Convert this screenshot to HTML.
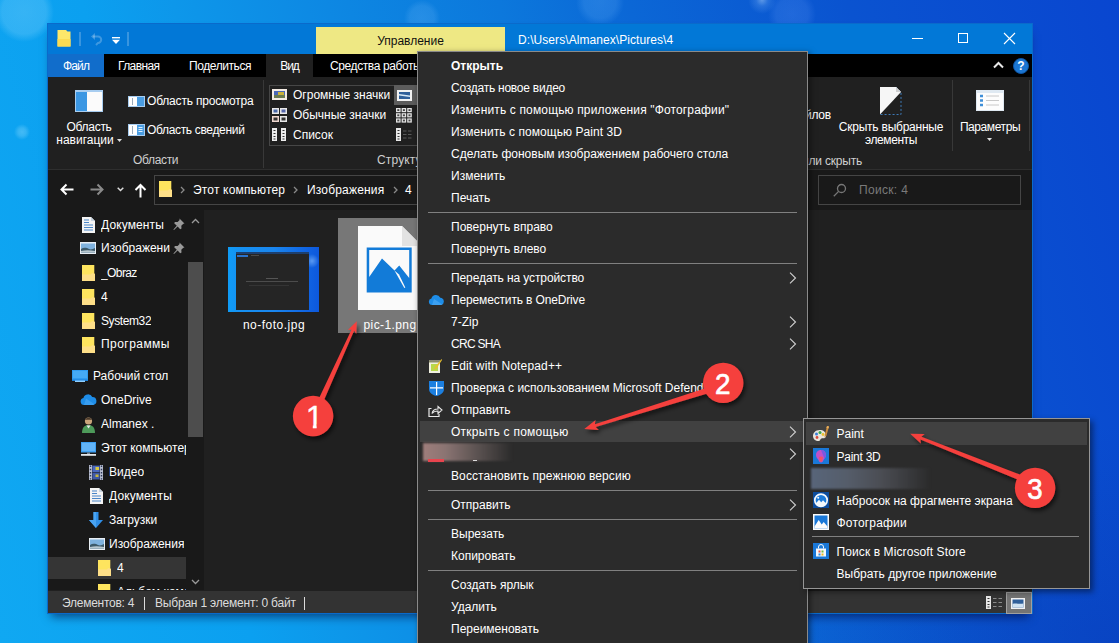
<!DOCTYPE html>
<html lang="ru">
<head>
<meta charset="utf-8">
<title>Explorer</title>
<style>
*{box-sizing:border-box;margin:0;padding:0}
html,body{width:1119px;height:643px;overflow:hidden}
body{position:relative;font-family:"Liberation Sans",sans-serif;font-size:12px;color:#fff;
background:
 radial-gradient(circle at 24px 12px, rgba(150,220,255,.30) 0, rgba(150,220,255,.26) 22px, rgba(150,220,255,0) 30px),
 radial-gradient(circle at 22px 132px, rgba(170,230,255,.35) 0, rgba(170,230,255,.25) 4px, rgba(170,230,255,0) 8px),
 radial-gradient(circle at 422px 18px, rgba(140,200,255,.20) 0, rgba(140,200,255,.16) 12px, rgba(140,200,255,0) 18px),
 radial-gradient(circle at 600px 2px, rgba(120,190,255,.22) 0, rgba(120,190,255,.18) 16px, rgba(120,190,255,0) 24px),
 radial-gradient(circle at 762px 0px, rgba(190,225,255,.45) 0, rgba(150,200,255,.20) 6px, rgba(120,190,255,0) 14px),
 radial-gradient(circle at 792px 14px, rgba(120,170,255,.20) 0, rgba(120,170,255,.16) 16px, rgba(120,170,255,0) 24px),
 radial-gradient(ellipse at 1119px 643px, rgba(6,40,160,.28) 0, rgba(6,40,160,0) 380px),
 linear-gradient(75deg,#10a8f2 0,#0ba0f0 245px,#0d97ea 333px,#0d86e2 502px,#0c78dc 647px,#0b67d6 773px,#0a53d0 985px,#0946d0 1247px);
}
.abs{position:absolute}
#win{position:absolute;left:48px;top:24px;width:984px;height:589px;background:#202020;box-shadow:0 0 0 1px #0a6acb,0 7px 9px -3px rgba(0,0,50,.55)}
#title{position:absolute;left:0;top:0;width:984px;height:30px;background:#0278d7}
#tabs{position:absolute;left:0;top:30px;width:984px;height:23px;background:#000}
#ribbon{position:absolute;left:0;top:53px;width:984px;height:93px;background:#202020}
#addr{position:absolute;left:0;top:146px;width:984px;height:40px;background:#191919}
#nav{position:absolute;left:0;top:186px;width:156px;height:380px;background:#191919;overflow:hidden}
#content{position:absolute;left:157px;top:186px;width:827px;height:380px;background:#202020}
#status{position:absolute;left:0;top:567px;width:984px;height:22px;background:#333}

#menu{position:absolute;left:417px;top:51px;width:391px;height:600px;background:#2b2b2b;border:1px solid #8a8a8a;border-bottom:0;box-shadow:2px 2px 6px rgba(0,0,0,.5)}
#sub{position:absolute;left:803px;top:418px;width:287px;height:171px;background:#2b2b2b;border:1px solid #969696;box-shadow:3px 3px 6px rgba(0,0,0,.45)}
.in{position:absolute;left:-1px;top:-1px;width:0;height:0}
#sub .t{margin-top:1px}
.t{position:absolute;white-space:nowrap;line-height:14px}
</style>
</head>
<body>
<div id="win">
 <div id="title">
  <svg class="abs" style="left:9px;top:5px" width="14" height="18" viewBox="0 0 14 18"><path d="M1 1h8l1.500 1.500H13.500V17.500H.500V1z" fill="#fde76a"/><path d="M.500 10h13v7.500H.500z" fill="#fbdb52"/></svg>
  <div class="abs" style="left:31px;top:8px;width:2px;height:14px;background:rgba(255,255,255,.22)"></div>
  <svg class="abs" style="left:43px;top:8px" width="12" height="14" viewBox="0 0 12 14"><path d="M2 4.5h5a3.2 3.2 0 0 1 0 6.4L5 13" fill="none" stroke="rgba(255,255,255,.24)" stroke-width="2"/><path d="M0 4.5l4-3.5v7z" fill="rgba(255,255,255,.24)"/></svg>
  <svg class="abs" style="left:63.500px;top:12.500px" width="8" height="8" viewBox="0 0 8 8"><rect x="0" y="0" width="8" height="1.400" fill="#fff"/><path d="M0 2.800h8l-4 4.200z" fill="#fff"/></svg>
  <div class="abs" style="left:79px;top:8px;width:2px;height:14px;background:rgba(255,255,255,.22)"></div>
  <div class="abs" style="left:268px;top:3px;width:189px;height:27px;background:#eee884"></div>
  <div class="t" style="left:268px;top:10px;width:189px;text-align:center;color:#111">Управление</div>
  <div class="t" style="left:470px;top:9px;color:#fff;letter-spacing:0.07px">D:\Users\Almanex\Pictures\4</div>
  <div class="abs" style="left:864px;top:14px;width:11px;height:1px;background:#fff"></div>
  <div class="abs" style="left:910px;top:9px;width:10px;height:10px;border:1px solid #fff"></div>
  <svg class="abs" style="left:955px;top:8px" width="13" height="13" viewBox="0 0 13 13"><path d="M1 1l11 11M12 1L1 12" stroke="#fff" stroke-width="1.1" fill="none"/></svg>
 </div>
 <div id="tabs">
  <div class="abs" style="left:0;top:0;width:56px;height:23px;background:#116dcb"></div>
  <div class="t" style="left:0;top:5px;width:56px;text-align:center;letter-spacing:-0.86px">Файл</div>
  <div class="t" style="left:70px;top:5px;letter-spacing:-0.62px">Главная</div>
  <div class="t" style="left:141px;top:5px;letter-spacing:-0.42px">Поделиться</div>
  <div class="abs" style="left:218px;top:0;width:47px;height:24px;background:#202020"></div>
  <div class="t" style="left:218px;top:5px;width:47px;text-align:center;letter-spacing:-1.13px">Вид</div>
  <div class="t" style="left:282px;top:5px;letter-spacing:-0.4px">Средства работы с рисунками</div>
  <svg class="abs" style="left:945px;top:7px" width="11" height="8" viewBox="0 0 11 8"><path d="M1 6.5L5.5 2 10 6.5" stroke="#e8e8e8" stroke-width="2" fill="none"/></svg>
  <div class="abs" style="left:965px;top:4px;width:16px;height:16px;border-radius:50%;background:#1c76d2;border:1px solid #0d56a6"></div>
  <div class="t" style="left:965px;top:5px;width:16px;text-align:center;font-weight:bold;font-size:12px">?</div>
 </div>
 <div id="ribbon">
  <svg class="abs" style="left:27px;top:13px" width="28" height="22" viewBox="0 0 28 22"><rect x="0" y="0" width="28" height="22" fill="#a8cdf0"/><rect x="1" y="2" width="11" height="19" fill="#3b97e3"/><rect x="12" y="2" width="15" height="19" fill="#fbfbfb"/></svg>
  <div class="t" style="left:8px;top:43px;width:66px;text-align:center;letter-spacing:-0.27px">Область</div>
  <div class="t" style="left:8px;top:56px;width:58px;text-align:center">навигации</div>
  <svg class="abs" style="left:69px;top:62px" width="5" height="3" viewBox="0 0 5 3"><path d="M0 0h5L2.5 3z" fill="#ddd"/></svg>
  <svg class="abs" style="left:80px;top:19px" width="17" height="11" viewBox="0 0 17 11"><rect width="17" height="11" fill="#a8cdf0"/><rect x="1" y="1" width="8" height="9" fill="#fff"/><rect x="9" y="1" width="7" height="9" fill="#4a9de2"/><rect x="4" y="2" width="1" height="7" fill="#9ab"/></svg>
  <div class="t" style="left:99px;top:17px;letter-spacing:-0.19px">Область просмотра</div>
  <svg class="abs" style="left:80px;top:47px" width="17" height="12" viewBox="0 0 17 12"><rect width="17" height="12" fill="#a8cdf0"/><rect x="1" y="1" width="8" height="10" fill="#fff"/><rect x="9" y="1" width="7" height="10" fill="#4a9de2"/><rect x="4" y="2" width="1" height="8" fill="#9ab"/><path d="M10.5 3.5h4M10.5 5.5h4M10.5 7.5h4" stroke="#dbeeff" stroke-width="1"/></svg>
  <div class="t" style="left:99px;top:46px;letter-spacing:-0.33px">Область сведений</div>
  <div class="t" style="left:85px;top:76px;color:#cfcfcf;letter-spacing:-0.34px">Области</div>
  <div class="abs" style="left:215px;top:3px;width:1px;height:88px;background:#383838"></div>
  <div class="abs" style="left:221px;top:8px;width:160px;height:61px;border:1px solid #474747;border-right:0"></div>
  <div class="abs" style="left:346px;top:8px;width:24px;height:20px;background:#5c5c5c"></div>
  <svg class="abs" style="left:224px;top:12px" width="15" height="11" viewBox="0 0 15 11"><rect width="15" height="11" fill="#f4ece4"/><rect x="2" y="2" width="11" height="7" fill="#4a68b8"/><rect x="6" y="3" width="6" height="5" fill="#c9b23a"/><rect x="2" y="6" width="11" height="3" fill="#6a7a50"/></svg>
  <div class="t" style="left:245px;top:11px">Огромные значки</div>
  <svg class="abs" style="left:224px;top:31px" width="15" height="15" viewBox="0 0 15 15"><rect x="0" y="0" width="7" height="6" fill="#e8e8e8"/><rect x="8" y="0" width="7" height="6" fill="#e8e8e8"/><rect x="0" y="8" width="7" height="6" fill="#f0d8d0"/><rect x="8" y="8" width="7" height="6" fill="#e8e8e8"/><rect x="1.5" y="1.5" width="4" height="3" fill="#4a68a8"/><rect x="9.5" y="1.5" width="4" height="3" fill="#56a"/><rect x="1.5" y="9.5" width="4" height="3" fill="#333"/><rect x="9.5" y="9.5" width="4" height="3" fill="#333"/></svg>
  <div class="t" style="left:245px;top:31px">Обычные значки</div>
  <svg class="abs" style="left:224px;top:51px" width="15" height="13" viewBox="0 0 15 13"><rect x="0" y="0" width="5" height="13" fill="#eee"/><rect x="9" y="0" width="5" height="13" fill="#eee"/><path d="M1.5 2.5h2M1.5 5.5h2M1.5 8.5h2M1.5 11h2M10.5 2.5h2M10.5 5.5h2M10.5 8.5h2M10.5 11h2" stroke="#333" stroke-width="1"/></svg>
  <div class="t" style="left:245px;top:51px">Список</div>
  <svg class="abs" style="left:349px;top:13px" width="15" height="11" viewBox="0 0 15 11"><rect width="15" height="11" fill="#f2f2f2"/><rect x="2" y="2" width="11" height="7" fill="#2f5f9a"/><path d="M2 4l11 1.5V7L2 5.5z" fill="#d8eaf8"/></svg>
  <svg class="abs" style="left:348px;top:31px" width="16" height="15" viewBox="0 0 16 15"><g fill="#e4e4e4"><rect x="0" y="0" width="4.6" height="4.2"/><rect x="5.6" y="0" width="4.6" height="4.2"/><rect x="11.2" y="0" width="4.6" height="4.2"/><rect x="0" y="5.2" width="4.6" height="4.2"/><rect x="5.6" y="5.2" width="4.6" height="4.2"/><rect x="11.2" y="5.2" width="4.6" height="4.2"/><rect x="0" y="10.4" width="4.6" height="4.2"/><rect x="5.6" y="10.4" width="4.6" height="4.2"/><rect x="11.2" y="10.4" width="4.6" height="4.2"/></g><g fill="#444"><rect x="1.3" y="1.2" width="2" height="1.8"/><rect x="6.9" y="1.2" width="2" height="1.8"/><rect x="12.5" y="1.2" width="2" height="1.8"/><rect x="1.3" y="6.4" width="2" height="1.8"/><rect x="6.9" y="6.4" width="2" height="1.8"/><rect x="12.5" y="6.4" width="2" height="1.8"/><rect x="1.3" y="11.6" width="2" height="1.8"/><rect x="6.9" y="11.6" width="2" height="1.8"/><rect x="12.5" y="11.6" width="2" height="1.8"/></g></svg>
  <svg class="abs" style="left:348px;top:51px" width="16" height="13" viewBox="0 0 16 13"><rect x="0" y="0" width="5" height="13" fill="#e8e8e8"/><path d="M1.5 2.5h2M1.5 5.5h2M1.5 8.5h2M1.5 11h2" stroke="#333"/><path d="M7 3h3.5M12 3h3.5M7 6.5h3.5M12 6.5h3.5M7 10h3.5M12 10h3.5" stroke="#5a5a5a" stroke-width="1"/></svg>
  <div class="t" style="left:329px;top:76px;color:#cfcfcf;letter-spacing:0.15px">Структура</div>
  <div class="t" style="right:201px;top:31px;letter-spacing:-0.2px">Расширения имён файлов</div>
  <svg class="abs" style="left:832px;top:10px" width="22" height="28" viewBox="0 0 22 28"><path d="M0 0h16l5 5v22.5H0z" fill="none" stroke="#3d7ab8" stroke-width="1" stroke-dasharray="2 2"/><path d="M0 0h16l5 5L0 27.5z" fill="#f6f6f6"/><path d="M16 0v5h5z" fill="#cfcfcf"/></svg>
  <div class="t" style="left:784px;top:43px;width:118px;text-align:center;letter-spacing:-0.23px">Скрыть выбранные</div>
  <div class="t" style="left:784px;top:56px;width:118px;text-align:center;letter-spacing:-0.43px">элементы</div>
  <div class="t" style="right:170px;top:77px;color:#cfcfcf;letter-spacing:-0.2px">Показать или скрыть</div>
  <div class="abs" style="left:904px;top:3px;width:1px;height:71px;background:#383838"></div>
  <svg class="abs" style="left:928px;top:13px" width="28" height="21" viewBox="0 0 28 21"><rect width="28" height="21" fill="#dfe9f2"/><rect x="1" y="3" width="26" height="17" fill="#fdfdfd"/><path d="M4 6h3M4 10.500h3M4 15h3" stroke="#3f8fd8" stroke-width="2.4"/><path d="M10 6h13M10 10.500h13M10 15h13" stroke="#c8c8c8" stroke-width="1"/></svg>
  <div class="t" style="left:906px;top:43px;width:72px;text-align:center;letter-spacing:-0.42px">Параметры</div>
  <svg class="abs" style="left:939px;top:61px" width="5" height="3" viewBox="0 0 5 3"><path d="M0 0h5L2.500 3z" fill="#ddd"/></svg>
  <div class="abs" style="left:981px;top:3px;width:1px;height:71px;background:#383838"></div>
  <div class="abs" style="left:0;top:92px;width:984px;height:1px;background:#2e2e2e"></div>
 </div>
 <div id="addr">
  <svg class="abs" style="left:12px;top:13px" width="14" height="13" viewBox="0 0 14 13"><path d="M13.500 6.500H2M6.500 1.500L1.500 6.500l5 5" stroke="#fff" stroke-width="2" fill="none"/></svg>
  <svg class="abs" style="left:42px;top:13px" width="14" height="13" viewBox="0 0 14 13"><path d="M.500 6.500H12M7.500 1.500l5 5-5 5" stroke="#8a8a8a" stroke-width="2" fill="none"/></svg>
  <svg class="abs" style="left:69px;top:17px" width="7" height="5" viewBox="0 0 7 5"><path d="M.700.700l2.800 2.800L6.300.700" stroke="#ddd" stroke-width="1.500" fill="none"/></svg>
  <svg class="abs" style="left:86px;top:13px" width="13" height="15" viewBox="0 0 13 15"><path d="M6.500 14.500V2M1.500 7l5-5 5 5" stroke="#fff" stroke-width="2" fill="none"/></svg>
  <div class="abs" style="left:106px;top:5px;width:560px;height:30px;border:1px solid #454545;background:#191919"></div>
  <svg class="abs" style="left:111px;top:11px" width="13" height="16" viewBox="0 0 13 16"><path d="M0 0h12.300v8.500l.700.500V16H0z" fill="#fee45e"/><path d="M0 9.500h8.500l2-1.500 2.500 1V16H0z" fill="#fedf88"/></svg>
  <svg class="abs" style="left:132px;top:16px" width="5" height="8" viewBox="0 0 5 8"><path d="M1 1l3 3-3 3" stroke="#8a8a8a" stroke-width="1.300" fill="none"/></svg>
  <div class="t" style="left:145px;top:13px;letter-spacing:0.17px">Этот компьютер</div>
  <svg class="abs" style="left:245px;top:16px" width="5" height="8" viewBox="0 0 5 8"><path d="M1 1l3 3-3 3" stroke="#8a8a8a" stroke-width="1.300" fill="none"/></svg>
  <div class="t" style="left:259px;top:13px;letter-spacing:0.18px">Изображения</div>
  <svg class="abs" style="left:345px;top:16px" width="5" height="8" viewBox="0 0 5 8"><path d="M1 1l3 3-3 3" stroke="#8a8a8a" stroke-width="1.300" fill="none"/></svg>
  <div class="t" style="left:357px;top:13px">4</div>
  <div class="abs" style="left:770px;top:5px;width:203px;height:30px;border:1px solid #454545;background:#191919"></div>
  <svg class="abs" style="left:785px;top:13px" width="14" height="14" viewBox="0 0 14 14"><circle cx="8.500" cy="5.500" r="4" stroke="#777" stroke-width="1.300" fill="none"/><path d="M5.600 8.400L.800 13.200" stroke="#777" stroke-width="1.300"/></svg>
  <div class="t" style="left:811px;top:13px;color:#7a7a7a;letter-spacing:0.32px">Поиск: 4</div>
 </div>
 <div id="nav">
  <div class="abs" style="left:0;top:347px;width:138px;height:22px;background:#353535"></div>
  <svg class="abs" style="left:33.5px;top:6.5px" width="13" height="16" viewBox="0 0 13 16"><path d="M0 0h9l4 4v12H0z" fill="#f4f4f4"/><path d="M9 0v4h4z" fill="#c8d4e0"/><path d="M2 3h5M2 5.500h5M2 8h9M2 10.500h9M2 13h9" stroke="#4a86c8" stroke-width="1.200"/></svg>
  <div class="t" style="left:53px;top:7.7px;max-width:85px;overflow:hidden;letter-spacing:.12px">Документы</div>
  <svg class="abs" style="left:32px;top:32px" width="16" height="12" viewBox="0 0 16 12"><rect width="16" height="12" fill="#e8eef4"/><rect x="1" y="1.500" width="14" height="9" fill="#7fb2de"/><path d="M1 7c3-2 6-1 8 0s4 0 6-1v4.500H1z" fill="#3d5a6a"/><path d="M1 9c4-1 9-1 14 0v1.500H1z" fill="#b9c8d0"/></svg>
  <div class="t" style="left:53px;top:31.3px;max-width:85px;overflow:hidden">Изображени</div>
  <svg class="abs" style="left:34px;top:54.5px" width="13" height="16" viewBox="0 0 13 16"><path d="M0 0h12.300v8.500l.700.500V16H0z" fill="#fee45e"/><path d="M0 9.500h8.500l2-1.500 2.500 1V16H0z" fill="#fedf88"/></svg>
  <div class="t" style="left:53px;top:55.7px;max-width:85px;overflow:hidden;letter-spacing:-.6px">_Obraz</div>
  <svg class="abs" style="left:34px;top:78.5px" width="13" height="16" viewBox="0 0 13 16"><path d="M0 0h12.300v8.500l.700.500V16H0z" fill="#fee45e"/><path d="M0 9.500h8.500l2-1.500 2.500 1V16H0z" fill="#fedf88"/></svg>
  <div class="t" style="left:53px;top:79.5px;max-width:85px;overflow:hidden">4</div>
  <svg class="abs" style="left:34px;top:102.5px" width="13" height="16" viewBox="0 0 13 16"><path d="M0 0h12.300v8.500l.700.500V16H0z" fill="#fee45e"/><path d="M0 9.500h8.500l2-1.500 2.500 1V16H0z" fill="#fedf88"/></svg>
  <div class="t" style="left:53px;top:103.5px;max-width:85px;overflow:hidden;letter-spacing:-.4px">System32</div>
  <svg class="abs" style="left:34px;top:126.5px" width="13" height="16" viewBox="0 0 13 16"><path d="M0 0h12.300v8.500l.700.500V16H0z" fill="#fee45e"/><path d="M0 9.500h8.500l2-1.500 2.500 1V16H0z" fill="#fedf88"/></svg>
  <div class="t" style="left:53px;top:127.3px;max-width:85px;overflow:hidden;letter-spacing:.45px">Программы</div>
  <svg class="abs" style="left:24px;top:160px" width="16" height="12" viewBox="0 0 16 12"><rect x="0" y="0" width="16" height="10" fill="#2f9bf0"/><rect x="1" y="1" width="14" height="7" fill="#45aaf5"/><rect x="0" y="9.500" width="16" height="1.500" fill="#1b7fd8"/><rect x="3" y="10.500" width="10" height="1.500" fill="#8fd0ff"/></svg>
  <div class="t" style="left:45px;top:159.2px;max-width:93px;overflow:hidden">Рабочий стол</div>
  <svg class="abs" style="left:31.5px;top:184px" width="17" height="11" viewBox="0 0 17 11"><path d="M4 11a3.600 3.600 0 0 1-.600-7.100A4.800 4.800 0 0 1 12.300 3a4 4 0 0 1 1 7.900z" fill="#1e8de8"/><path d="M6 4.500l8.500 5.800c-.400.400-1 .700-1.500.700H4z" fill="#4aa8f4" opacity=".6"/></svg>
  <div class="t" style="left:53px;top:182.8px;max-width:85px;overflow:hidden">OneDrive</div>
  <svg class="abs" style="left:33.5px;top:206.5px" width="13" height="16" viewBox="0 0 13 16"><circle cx="6.500" cy="4" r="3.600" fill="#c9a37a"/><path d="M3 3c1-3 6-3 7 0c-2-.500-5-.500-7 0z" fill="#4a3a2a"/><path d="M0 16c0-6 3-8 6.500-8s6.500 2 6.500 8z" fill="#4d9a5a"/><path d="M4.500 8.500l2 3 2-3z" fill="#e8e8e8"/></svg>
  <div class="t" style="left:53px;top:207.2px;max-width:85px;overflow:hidden">Almanex .</div>
  <svg class="abs" style="left:32px;top:231.5px" width="17" height="14" viewBox="0 0 17 14"><rect x="1" y="0" width="15" height="10.500" fill="#3d9ff2"/><rect x="2" y="1" width="13" height="8" fill="#62b4f8"/><rect x="7" y="10.500" width="3" height="1.500" fill="#789"/><rect x="1" y="12" width="15" height="1.800" fill="#e4e8ec"/></svg>
  <div class="t" style="left:53px;top:230.8px;max-width:85px;overflow:hidden">Этот компьютер</div>
  <svg class="abs" style="left:41px;top:255px" width="14" height="15" viewBox="0 0 14 15"><rect width="14" height="15" fill="#2c3858"/><rect x="0" y="0" width="3" height="15" fill="#b8bed0"/><rect x="11" y="0" width="3" height="15" fill="#b8bed0"/><path d="M1.500 .500v14M12.500 .500v14" stroke="#2c3858" stroke-width="1.400" stroke-dasharray="1.500 1.700"/><rect x="3.500" y="1" width="7" height="6" fill="#4a68c0"/><rect x="3.500" y="8" width="7" height="6" fill="#405aa8"/><rect x="6.500" y="2" width="3.500" height="3" fill="#d8c840"/><rect x="6.500" y="9.500" width="3" height="2.500" fill="#c8b838"/></svg>
  <div class="t" style="left:61px;top:255px;max-width:77px;overflow:hidden">Видео</div>
  <svg class="abs" style="left:41.5px;top:278px" width="13" height="16" viewBox="0 0 13 16"><path d="M0 0h9l4 4v12H0z" fill="#f4f4f4"/><path d="M9 0v4h4z" fill="#c8d4e0"/><path d="M2 3h5M2 5.500h5M2 8h9M2 10.500h9M2 13h9" stroke="#4a86c8" stroke-width="1.200"/></svg>
  <div class="t" style="left:61px;top:279px;max-width:77px;overflow:hidden;letter-spacing:.12px">Документы</div>
  <svg class="abs" style="left:41px;top:302px" width="14" height="16" viewBox="0 0 14 16"><path d="M4.500 0h5v8H14L7 16 0 8h4.500z" fill="#2f8fe8"/><path d="M4.500 0h2.500v16L0 8h4.500z" fill="#4aa4f2"/></svg>
  <div class="t" style="left:61px;top:303px;max-width:77px;overflow:hidden">Загрузки</div>
  <svg class="abs" style="left:40.5px;top:328px" width="16" height="12" viewBox="0 0 16 12"><rect width="16" height="12" fill="#e8eef4"/><rect x="1" y="1.500" width="14" height="9" fill="#7fb2de"/><path d="M1 7c3-2 6-1 8 0s4 0 6-1v4.500H1z" fill="#3d5a6a"/><path d="M1 9c4-1 9-1 14 0v1.500H1z" fill="#b9c8d0"/></svg>
  <div class="t" style="left:61px;top:327px;max-width:77px;overflow:hidden">Изображения</div>
  <svg class="abs" style="left:49.5px;top:350px" width="13" height="16" viewBox="0 0 13 16"><path d="M0 0h12.300v8.500l.700.500V16H0z" fill="#fee45e"/><path d="M0 9.500h8.500l2-1.500 2.500 1V16H0z" fill="#fedf88"/></svg>
  <div class="t" style="left:69px;top:351.3px;max-width:69px;overflow:hidden">4</div>
  <svg class="abs" style="left:49.5px;top:374px" width="13" height="16" viewBox="0 0 13 16"><path d="M0 0h12.300v8.500l.700.500V16H0z" fill="#fee45e"/><path d="M0 9.500h8.500l2-1.500 2.500 1V16H0z" fill="#fedf88"/></svg>
  <div class="t" style="left:69px;top:375.3px;max-width:69px;overflow:hidden">Альбом камеры</div>
  <svg class="abs" style="left:125px;top:8px" width="12" height="12" viewBox="0 0 12 12"><path d="M6.500 0.500l5 5-1.200.300-2 2 .200 2.700-1.300.700L4.600 8.600 1 12 .400 11.400l3.400-3.600L1.200 5.200l.700-1.300 2.700.200 2-2z" fill="#9a9a9a"/></svg>
  <svg class="abs" style="left:125px;top:32px" width="12" height="12" viewBox="0 0 12 12"><path d="M6.500 0.500l5 5-1.200.300-2 2 .200 2.700-1.300.700L4.600 8.600 1 12 .400 11.400l3.400-3.600L1.200 5.200l.700-1.300 2.700.200 2-2z" fill="#9a9a9a"/></svg>
  <div class="abs" style="left:139px;top:0;width:17px;height:380px;background:#191919"></div>
  <div class="abs" style="left:140px;top:52px;width:15px;height:175px;background:#4d4d4d"></div>
  <svg class="abs" style="left:143px;top:8px" width="9" height="6" viewBox="0 0 9 6"><path d="M1 5l3.500-3.500L8 5" stroke="#999" stroke-width="1.300" fill="none"/></svg>
  <svg class="abs" style="left:143px;top:369px" width="9" height="6" viewBox="0 0 9 6"><path d="M1 1l3.500 3.500L8 1" stroke="#999" stroke-width="1.300" fill="none"/></svg>
  </div>
 <div id="content">
  <div class="abs" style="left:23px;top:36.500px;width:90.500px;height:65.500px;background:radial-gradient(circle at 84px 14px,rgba(150,200,255,.55) 0,rgba(150,200,255,0) 7px),linear-gradient(90deg,#0f9cf6 0,#1591f2 12%,#1a86ee 50%,#1168e4 82%,#0d58dc 100%)"></div>
  <div class="abs" style="left:31px;top:41.500px;width:73px;height:58.200px;background:#252525"></div>
  <div class="abs" style="left:31px;top:41.500px;width:73px;height:2px;background:#1d3f6e"></div>
  <div class="abs" style="left:32px;top:44.500px;width:11px;height:2.500px;background:#2a72cc"></div>
  <div class="abs" style="left:46px;top:45px;width:8px;height:1px;background:#4a4a4a"></div>
  <div class="abs" style="left:61px;top:68px;width:12px;height:1px;background:#555"></div>
  <div class="abs" style="left:41px;top:71px;width:52px;height:1px;background:#4c4c4c"></div>
  <div class="abs" style="left:44px;top:75px;width:40px;height:1px;background:#343434"></div>
  <div class="t" style="left:14px;top:108px;width:110px;text-align:center;letter-spacing:.5px">no-foto.jpg</div>
  <div class="abs" style="left:133px;top:8px;width:104px;height:115px;background:#777"></div>
  <svg class="abs" style="left:153px;top:16px" width="64" height="84" viewBox="0 0 64 84"><path d="M0 0h44l20 20v64H0z" fill="#fafafa"/><path d="M44 0v20h20z" fill="#e2e2e2"/><rect x="8.700" y="21.500" width="45" height="45" fill="#127bd8"/><path d="M11.200 24h40v28l-10-12.500-4.700 5L24 32.500 11.200 51z" fill="#fafafa"/><path d="M36.500 44.500l9.800 17.500 1-.500-6.300-13z" fill="#fafafa"/></svg>
  <div class="t" style="left:133px;top:108px;width:104px;text-align:center;letter-spacing:.4px">pic-1.png</div>
 </div>
 <div id="status">
  <div class="t" style="left:14px;top:5px;color:#dcdcdc;letter-spacing:-.25px">Элементов: 4</div>
  <div class="abs" style="left:96px;top:6px;width:1px;height:13px;background:#dcdcdc"></div>
  <div class="t" style="left:107px;top:5px;color:#dcdcdc;letter-spacing:-.2px">Выбран 1 элемент: 0 байт</div>
  <div class="abs" style="left:256px;top:6px;width:1px;height:13px;background:#dcdcdc"></div>
  <svg class="abs" style="left:938px;top:5px" width="17" height="13" viewBox="0 0 17 13"><rect x="0" y="0" width="5" height="13" fill="#e8e8e8"/><path d="M1.500 2.500h2M1.500 5.500h2M1.500 8.500h2M1.500 11h2" stroke="#333"/><path d="M7 2.500h3.500M12.500 2.500H16M7 6.500h3.500M12.500 6.500H16M7 10.500h3.500M12.500 10.500H16" stroke="#8a8a8a" stroke-width="1"/></svg>
  <div class="abs" style="left:958px;top:1px;width:26px;height:22px;background:#747474;border:1px solid #a0a0a0"></div>
  <svg class="abs" style="left:963px;top:7px" width="14" height="11" viewBox="0 0 14 11"><rect width="14" height="11" fill="#f2f2f2"/><rect x="1.500" y="1.500" width="11" height="8" fill="#2f5f9a"/><path d="M1.500 6c3-1.500 6 .5 11-.5v4h-11z" fill="#cfe2f2"/></svg>
 </div>
</div>
<div id="menu"><div class="in">
  <div class="abs" style="left:3px;top:370px;width:384px;height:21px;background:#414141"></div>
  <div class="t" style="left:34px;top:8px;font-weight:bold">Открыть</div>
  <div class="t" style="left:34px;top:30px;letter-spacing:-0.24px">Создать новое видео</div>
  <div class="t" style="left:34px;top:52px;letter-spacing:0.15px">Изменить с помощью приложения "Фотографии"</div>
  <div class="t" style="left:34px;top:74px;letter-spacing:0.06px">Изменить с помощью Paint 3D</div>
  <div class="t" style="left:34px;top:96px">Сделать фоновым изображением рабочего стола</div>
  <div class="t" style="left:34px;top:118px">Изменить</div>
  <div class="t" style="left:34px;top:140px">Печать</div>
  <div class="t" style="left:34px;top:169.2px">Повернуть вправо</div>
  <div class="t" style="left:34px;top:191.2px">Повернуть влево</div>
  <div class="t" style="left:34px;top:220px;letter-spacing:-0.1px">Передать на устройство</div>
  <svg class="abs" style="left:372px;top:221px" width="8" height="12" viewBox="0 0 8 12"><path d="M1 .700L6.500 6 1 11.300" stroke="#d0d0d0" stroke-width="1.100" fill="none"/></svg>
  <div class="t" style="left:34px;top:242px;letter-spacing:-0.15px">Переместить в OneDrive</div>
  <div class="t" style="left:34px;top:264px">7-Zip</div>
  <svg class="abs" style="left:372px;top:265px" width="8" height="12" viewBox="0 0 8 12"><path d="M1 .700L6.500 6 1 11.300" stroke="#d0d0d0" stroke-width="1.100" fill="none"/></svg>
  <div class="t" style="left:34px;top:286px;letter-spacing:-0.7px">CRC SHA</div>
  <svg class="abs" style="left:372px;top:287px" width="8" height="12" viewBox="0 0 8 12"><path d="M1 .700L6.500 6 1 11.300" stroke="#d0d0d0" stroke-width="1.100" fill="none"/></svg>
  <div class="t" style="left:34px;top:308px;letter-spacing:0.17px">Edit with Notepad++</div>
  <div class="t" style="left:34px;top:330px">Проверка с использованием Microsoft Defender</div>
  <div class="t" style="left:34px;top:352px">Отправить</div>
  <div class="t" style="left:34px;top:374px;letter-spacing:0.26px">Открыть с помощью</div>
  <svg class="abs" style="left:372px;top:375px" width="8" height="12" viewBox="0 0 8 12"><path d="M1 .700L6.500 6 1 11.300" stroke="#d0d0d0" stroke-width="1.100" fill="none"/></svg>
  <svg class="abs" style="left:372px;top:397px" width="8" height="12" viewBox="0 0 8 12"><path d="M1 .700L6.500 6 1 11.300" stroke="#d0d0d0" stroke-width="1.100" fill="none"/></svg>
  <div class="t" style="left:34px;top:418px;letter-spacing:0.1px">Восстановить прежнюю версию</div>
  <div class="t" style="left:34px;top:447px">Отправить</div>
  <svg class="abs" style="left:372px;top:448px" width="8" height="12" viewBox="0 0 8 12"><path d="M1 .700L6.500 6 1 11.300" stroke="#d0d0d0" stroke-width="1.100" fill="none"/></svg>
  <div class="t" style="left:34px;top:476px">Вырезать</div>
  <div class="t" style="left:34px;top:498px">Копировать</div>
  <div class="t" style="left:34px;top:527px">Создать ярлык</div>
  <div class="t" style="left:34px;top:549px">Удалить</div>
  <div class="t" style="left:34px;top:571px">Переименовать</div>
  <div class="abs" style="left:11px;top:161px;width:369px;height:1px;background:#808080"></div>
  <div class="abs" style="left:11px;top:212px;width:369px;height:1px;background:#808080"></div>
  <div class="abs" style="left:11px;top:439px;width:369px;height:1px;background:#808080"></div>
  <div class="abs" style="left:11px;top:468px;width:369px;height:1px;background:#808080"></div>
  <div class="abs" style="left:11px;top:519px;width:369px;height:1px;background:#808080"></div>
  <svg class="abs" style="left:10.5px;top:244px" width="17" height="10" viewBox="0 0 17 10"><path d="M4 10a3.300 3.300 0 0 1-.600-6.500A4.800 4.800 0 0 1 12.300 2.800a3.700 3.700 0 0 1 1 7.200z" fill="#1e8de8"/><path d="M6 4l8.500 5.500c-.400.300-1 .500-1.500.500H4z" fill="#55b0f8" opacity=".55"/></svg>
  <svg class="abs" style="left:12px;top:308px" width="13" height="14" viewBox="0 0 13 14"><rect x="0" y="1.500" width="11" height="12.500" fill="#f0f0e0"/><rect x="0" y="1.500" width="11" height="2" fill="#8a8a6a"/><rect x="2" y="5" width="7" height="7" fill="#b8d84a"/><path d="M12.500 0L6 8l-1 2.500L7.500 9.500 13 1z" fill="#e8c030"/></svg>
  <svg class="abs" style="left:11.5px;top:329.5px" width="15" height="15" viewBox="0 0 15 15"><path d="M0 0h15v8c0 4-4 6.500-7.500 7C4 14.500 0 12 0 8z" fill="#1c7fe0"/><path d="M7 1h1.200v13H7zM1 6.300h13v1.200H1z" fill="#fff"/></svg>
  <svg class="abs" style="left:11px;top:353.5px" width="15" height="12" viewBox="0 0 15 12"><path d="M3.500 3.500H1v8h10V9" stroke="#e8e8e8" stroke-width="1.200" fill="none"/><path d="M4 8.500c.500-3 2.500-4.500 6-4.500V1.500L14 5l-4 3.500V6c-2.500 0-4.500.500-6 2.500z" stroke="#e8e8e8" stroke-width="1.100" fill="none"/></svg>
  <div class="abs" style="left:6px;top:392px;width:90px;height:18px;background:linear-gradient(90deg,#a07e7c 0,#8a7472 25%,#5c5352 60%,rgba(60,58,58,0) 100%);filter:blur(1px)"></div>
  <div class="abs" style="left:11px;top:408px;width:16px;height:3px;background:#e8444e"></div>
  <div class="abs" style="left:56px;top:409px;width:4px;height:1px;background:#ddd"></div>
  </div></div>
<div id="sub"><div class="in">
  <div class="abs" style="left:3px;top:4px;width:281px;height:23px;background:#414141"></div>
  <div class="t" style="left:33.5px;top:8.3px">Paint</div>
  <div class="t" style="left:33.5px;top:30.5px;letter-spacing:-0.25px">Paint 3D</div>
  <div class="t" style="left:33.5px;top:74.9px">Набросок на фрагменте экрана</div>
  <div class="t" style="left:33.5px;top:96.6px;letter-spacing:0.18px">Фотографии</div>
  <div class="t" style="left:33.5px;top:125.7px;letter-spacing:0.1px">Поиск в Microsoft Store</div>
  <div class="t" style="left:33.5px;top:147.9px">Выбрать другое приложение</div>
  <div class="abs" style="left:9px;top:118px;width:267px;height:1px;background:#808080"></div>
  <svg class="abs" style="left:10px;top:7.5px" width="17" height="16" viewBox="0 0 17 16"><path d="M6.500 4C2.500 4 0 7 0 10s2.500 5 5.500 5c2 0 1.500-2 3-2.500S13 13 13 9.500 10.500 4 6.500 4z" fill="#e8e4dc"/><circle cx="3.500" cy="8" r="1.500" fill="#3a7fd8"/><circle cx="7" cy="6.500" r="1.500" fill="#3aa84a"/><circle cx="10" cy="8.500" r="1.400" fill="#e8c030"/><circle cx="4" cy="11.500" r="1.400" fill="#d84a3a"/><path d="M14 0l2 .500-2.500 9-2 2 .300-2.800z" fill="#c88a3a"/><path d="M14 0l2 .500-.600 2-2-.500z" fill="#e8b060"/></svg>
  <svg class="abs" style="left:10px;top:30px" width="16" height="16" viewBox="0 0 16 16"><rect width="16" height="16" fill="#1a78d8"/><path d="M8 2c3 0 5 2.200 5 5 0 2.500-1.800 3.500-2.500 5-.500 1.200-1 2.500-2.500 2.500S6 13.200 5.500 12C4.800 10.500 3 9.500 3 7c0-2.800 2-5 5-5z" fill="#c050c8"/><path d="M8 2c3 0 5 2.200 5 5 0 1.500-.700 2.500-1.400 3.400C10.500 8 9.500 6 8 2z" fill="#7a58e0"/><path d="M6 9c1-.800 3-.800 4 0l-.700 4c-.300 1-2.300 1-2.600 0z" fill="#f05068"/></svg>
  <div class="abs" style="left:8px;top:50px;width:120px;height:21px;background:linear-gradient(90deg,#58657a 0,#555d6a 30%,#4a4c52 60%,rgba(60,60,62,0) 100%);filter:blur(1px)"></div>
  <svg class="abs" style="left:10px;top:74px" width="16" height="16" viewBox="0 0 16 16"><rect width="16" height="16" fill="#0d4c9c"/><circle cx="8" cy="8.300" r="6.200" fill="#1c7ad8" stroke="#f4f8fc" stroke-width="1.700"/><path d="M2.800 11.500l3.200-3.700 2.200 2.400 1.800-1.900 3.200 3.200a6.200 6.200 0 0 1-10.400 0z" fill="#f4f8fc"/><circle cx="5.200" cy="5.800" r="1" fill="#f4f8fc"/></svg>
  <svg class="abs" style="left:10px;top:96px" width="16" height="16" viewBox="0 0 16 16"><rect width="16" height="16" fill="#fbfbfb"/><rect x="1.500" y="1.500" width="13" height="13" fill="#1a78d8"/><path d="M1.500 12.500l4.200-6.500 3 4.500 2-2.500 3.800 4.500v2h-13z" fill="#fbfbfb"/></svg>
  <svg class="abs" style="left:10px;top:125px" width="16" height="16" viewBox="0 0 16 16"><rect width="16" height="16" fill="#1a78d8"/><path d="M3 5.500h10v8H3z" fill="#f4f8fc"/><path d="M5.500 5.500V4a2.500 2.500 0 0 1 5 0v1.500" stroke="#f4f8fc" stroke-width="1" fill="none"/><rect x="5.500" y="7.500" width="2" height="2" fill="#e8503a"/><rect x="8.500" y="7.500" width="2" height="2" fill="#7ab83a"/><rect x="5.500" y="10.500" width="2" height="2" fill="#2a8ae0"/><rect x="8.500" y="10.500" width="2" height="2" fill="#f0b820"/></svg>
  </div></div>
<svg id="anno" class="abs" style="left:0;top:0" width="1119" height="643" viewBox="0 0 1119 643">
 <defs><filter id="sh" x="-30%" y="-30%" width="170%" height="170%"><feDropShadow dx="2" dy="3" stdDeviation="2" flood-color="#000" flood-opacity=".6"/></filter></defs>
 <g filter="url(#sh)" fill="#f5413d">
  <path d="M356.8 321.3L347.9 329.9L351.6 329.4L311.2 414.8L316.6 417.2L354.2 330.5L356.2 333.7z"/>
  <circle cx="313.100" cy="416" r="20.200"/>
  <path d="M584.3 429.0L598.7 429.9L595.7 426.9L724.1 388.6L722.3 382.8L594.9 424.2L595.6 420.0z"/>
  <circle cx="723.200" cy="382.900" r="20.200"/>
  <path d="M910.2 433.8L920.8 443.6L920.4 439.4L1033.9 486.3L1036.1 480.7L921.4 436.8L924.7 434.0z"/>
  <circle cx="1035.100" cy="487.900" r="20.200"/>
 </g>
 <clipPath id="c1"><rect x="295" y="398" width="36" height="26.400"/><rect x="312.800" y="424" width="3.800" height="6"/></clipPath>
 <g fill="#fff" stroke="#fff" stroke-width=".7" style="font-family:'Liberation Sans',sans-serif;font-size:30px" text-anchor="middle">
  <text x="314.400" y="428" style="font-size:31.500px" stroke-width=".3" clip-path="url(#c1)">1</text><text x="0" y="394" transform="translate(722.700 0) scale(.93 1)">2</text><text x="0" y="499" transform="translate(1034.900 0) scale(.92 1)">3</text>
 </g>
</svg>
</body>
</html>
